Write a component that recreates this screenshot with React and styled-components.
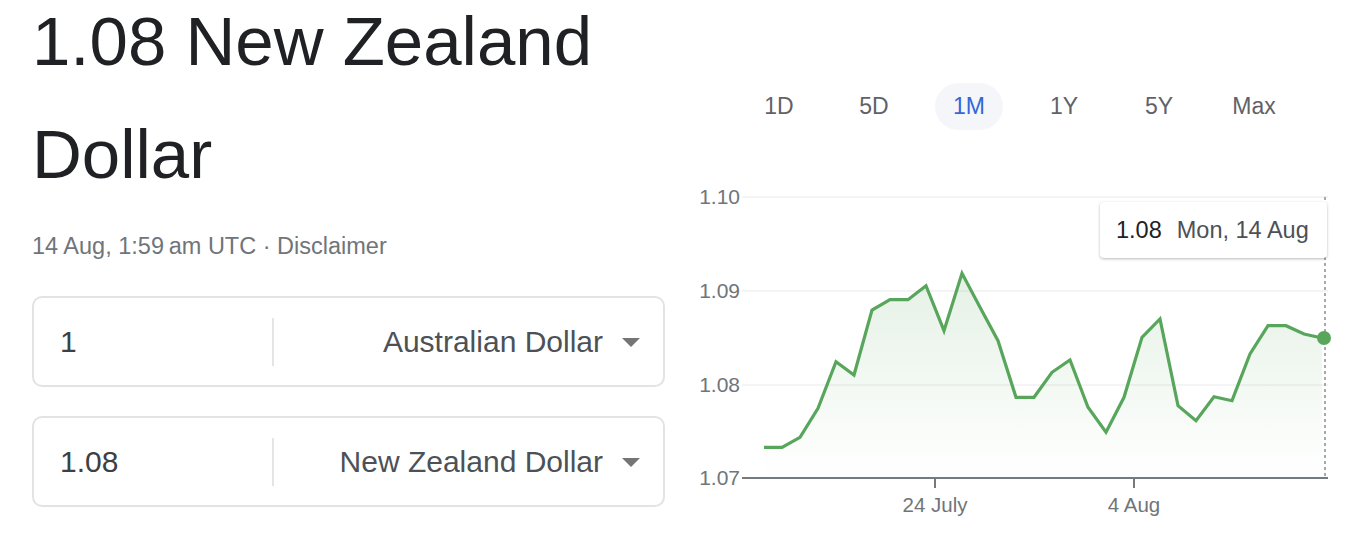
import React from "react";
import styled, { createGlobalStyle } from "styled-components";

const Global = createGlobalStyle`
  html, body { margin: 0; padding: 0; background: #fff; }
  body { font-family: "Liberation Sans", Arial, sans-serif; }
`;

const Page = styled.div`
  display: flex;
  width: 1352px;
  height: 542px;
  overflow: hidden;
`;

const Left = styled.div`
  width: 633px;
  padding-left: 32px;
  flex-shrink: 0;
`;

const Title = styled.h1`
  margin: -15px 0 0 0;
  font-size: 69px;
  line-height: 113px;
  font-weight: 400;
  color: #202124;
`;

const Meta = styled.div`
  margin-top: 21px;
  font-size: 23.5px;
  line-height: 28px;
  color: #70757a;
`;

const Boxes = styled.div`
  margin-top: 36px;
  display: flex;
  flex-direction: column;
  gap: 29px;
`;

const Box = styled.div`
  height: 91px;
  box-sizing: border-box;
  border: 2px solid #e2e3e5;
  border-radius: 10px;
  display: flex;
  align-items: center;
`;

const Value = styled.div`
  width: 238px;
  box-sizing: border-box;
  padding-left: 26px;
  font-size: 30px;
  color: #3c4043;
`;

const Divider = styled.div`
  width: 2px;
  height: 48px;
  background: #e4e5e7;
`;

const Select = styled.div`
  flex: 1;
  display: flex;
  justify-content: flex-end;
  align-items: center;
  gap: 19px;
  padding-right: 23px;
  font-size: 30px;
  color: #4d5156;
`;

const Caret = styled.span`
  width: 0;
  height: 0;
  border-left: 9px solid transparent;
  border-right: 9px solid transparent;
  border-top: 9px solid #757575;
  margin-top: 2px;
`;

const Right = styled.div`
  margin-left: 25px;
  width: 650px;
  flex-shrink: 0;
`;

const Tabs = styled.div`
  display: flex;
  gap: 27px;
  margin-top: 83px;
  padding-left: 55px;
`;

const Tab = styled.div`
  width: 68px;
  height: 47px;
  border-radius: 24px;
  display: flex;
  align-items: center;
  justify-content: center;
  font-size: 23px;
  color: ${(p) => (p.$active ? "#3367d6" : "#5f6368")};
  background: ${(p) => (p.$active ? "#f4f6f9" : "transparent")};
`;

const ChartWrap = styled.div`
  position: relative;
  margin-top: 49px;
  width: 650px;
  height: 350px;
`;

const Tooltip = styled.div`
  position: absolute;
  left: 410px;
  top: 23px;
  width: 227px;
  height: 56px;
  box-sizing: border-box;
  background: #fff;
  border-radius: 4px;
  box-shadow: 0 1px 3px rgba(0, 0, 0, 0.28);
  display: flex;
  align-items: center;
  padding-left: 16px;
  gap: 15px;
  font-size: 23.5px;
  white-space: nowrap;
`;

const TipValue = styled.span`
  color: #202124;
`;

const TipDate = styled.span`
  color: #4d5156;
`;

const ys = [448.3, 448.3, 438.3, 409.3, 362.7, 376, 311, 300.7, 300.7, 286.7, 331.7, 274.3, 308.3, 341.7, 398.3, 398.3, 373.3, 361, 408.3, 433.3, 398.3, 338.3, 320, 406.7, 421.7, 397.7, 401.7, 355, 326.7, 326.7, 335, 339];
const pts = ys.map((y, i) => [764 + 18 * i, y]);
const linePath = pts.map((p, i) => `${i ? "L" : "M"}${p[0]} ${p[1]}`).join(" ");
const areaPath = `${linePath} L${pts[pts.length - 1][0]} 479 L${pts[0][0]} 479 Z`;

const grid = [
  { y: 198, label: "1.10" },
  { y: 292, label: "1.09" },
  { y: 386, label: "1.08" },
];

const FONT = "Liberation Sans, Arial, sans-serif";

function Chart() {
  return (
    <svg width="650" height="350" viewBox="690 180 650 350" style={{ display: "block" }}>
      <defs>
        <linearGradient id="fill" x1="0" y1="270" x2="0" y2="479" gradientUnits="userSpaceOnUse">
          <stop offset="0" stopColor="#58a65c" stopOpacity="0.16" />
          <stop offset="1" stopColor="#58a65c" stopOpacity="0" />
        </linearGradient>
      </defs>
      {grid.map((g) => (
        <g key={g.label}>
          <line x1="742" x2="1328" y1={g.y} y2={g.y} stroke="#f1f1f1" strokeWidth="1.5" />
          <text x="740" y={g.y + 7} textAnchor="end" fontSize="21" fill="#70757a" fontFamily={FONT}>
            {g.label}
          </text>
        </g>
      ))}
      <text x="740" y={486} textAnchor="end" fontSize="21" fill="#70757a" fontFamily={FONT}>
        1.07
      </text>
      <path d={areaPath} fill="url(#fill)" />
      <line x1="1325" x2="1325" y1="198" y2="479" stroke="#8a8e92" strokeWidth="1.5" strokeDasharray="3 3" />
      <line x1="742" x2="1328" y1="479" y2="479" stroke="#757a7f" strokeWidth="2" />
      <line x1="935" x2="935" y1="479" y2="489" stroke="#757a7f" strokeWidth="2" />
      <line x1="1134" x2="1134" y1="479" y2="489" stroke="#757a7f" strokeWidth="2" />
      <text x="935" y="513" textAnchor="middle" fontSize="20.5" fill="#70757a" fontFamily={FONT}>24 July</text>
      <text x="1134" y="513" textAnchor="middle" fontSize="20.5" fill="#70757a" fontFamily={FONT}>4 Aug</text>
      <path d={linePath} fill="none" stroke="#58a65c" strokeWidth="3.2" strokeLinejoin="miter" />
      <circle cx="1324" cy="339" r="7" fill="#58a65c" />
    </svg>
  );
}

const tabs = ["1D", "5D", "1M", "1Y", "5Y", "Max"];

export default function App() {
  return (
    <Page>
      <Global />
      <Left>
        <Title>1.08 New Zealand Dollar</Title>
        <Meta>14 Aug, 1:59{"\u202F"}am UTC · Disclaimer</Meta>
        <Boxes>
          <Box>
            <Value>1</Value>
            <Divider />
            <Select>
              Australian Dollar
              <Caret />
            </Select>
          </Box>
          <Box>
            <Value>1.08</Value>
            <Divider />
            <Select>
              New Zealand Dollar
              <Caret />
            </Select>
          </Box>
        </Boxes>
      </Left>
      <Right>
        <Tabs>
          {tabs.map((t) => (
            <Tab key={t} $active={t === "1M"}>
              {t}
            </Tab>
          ))}
        </Tabs>
        <ChartWrap>
          <Chart />
          <Tooltip>
            <TipValue>1.08</TipValue>
            <TipDate>Mon, 14 Aug</TipDate>
          </Tooltip>
        </ChartWrap>
      </Right>
    </Page>
  );
}
